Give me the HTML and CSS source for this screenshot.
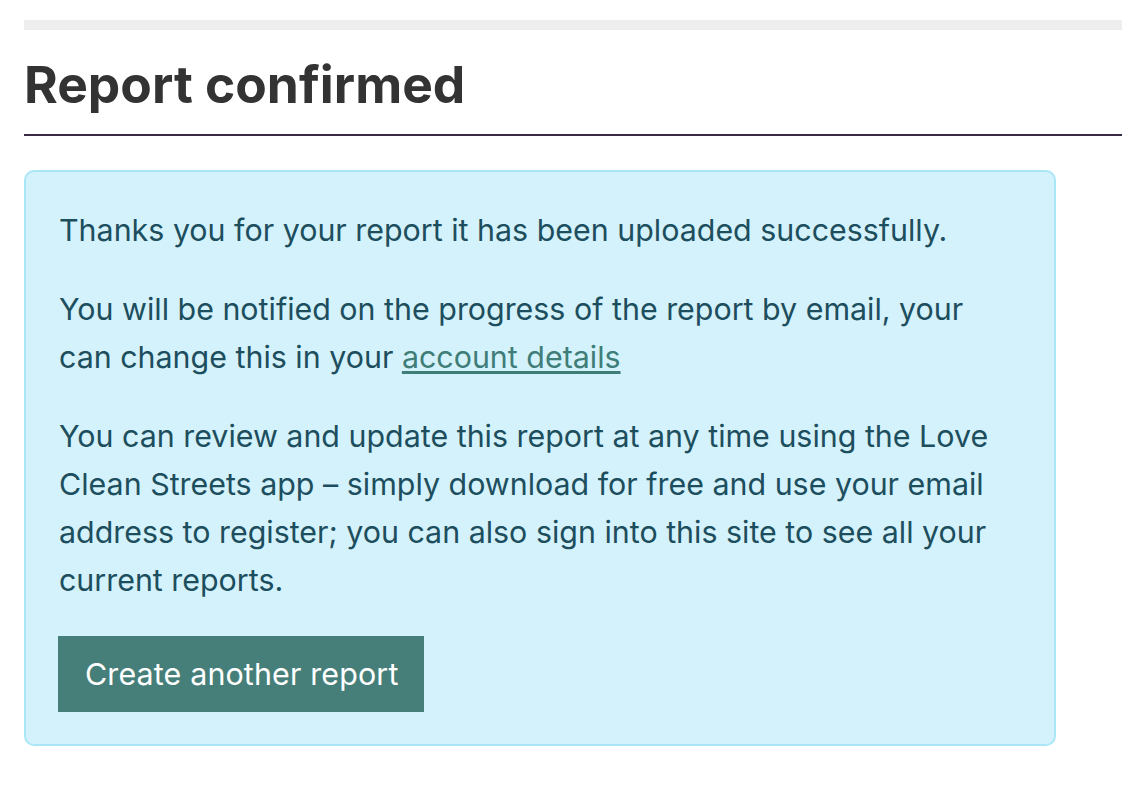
FILE: index.html
```html
<!DOCTYPE html>
<html lang="en">
<head>
<meta charset="utf-8">
<title>Report confirmed</title>
<link rel="stylesheet" href="styles.css">
</head>
<body>
<div class="page">
  <div class="topbar"></div>
  <h1 class="title">Report confirmed</h1>
  <div class="alert">
    <p>Thanks you for your report it has been uploaded successfully.</p>
    <p>You will be notified on the progress of the report by email, your can change this in your <a href="#" class="link">account details</a></p>
    <p>You can review and update this report at any time using the Love Clean Streets app – simply download for free and use your email address to register; you can also sign into this site to see all your current reports.</p>
    <a href="#" class="btn">Create another report</a>
  </div>
</div>
</body>
</html>
```

FILE: styles.css
```css
html, body {
  margin: 0;
  padding: 0;
  background: #ffffff;
}
body {
  font-family: Inter, "Noto Sans", "Liberation Sans", sans-serif;
}
.page {
  padding: 20px 0 0 24px;
}
.topbar {
  height: 10px;
  background: #eeeeee;
}
.title {
  margin: 0;
  padding: 24px 0 20px;
  font-size: 51.5px;
  line-height: 60px;
  font-weight: 700;
  color: #333333;
  letter-spacing: 0;
  border-bottom: 2px solid #3a2b45;
}
.alert {
  margin-top: 34px;
  width: 1032px;
  box-sizing: border-box;
  padding: 34px 33px 32px;
  background: #d4f2fb;
  border: 2px solid #a9e7f6;
  border-radius: 10px;
  color: #1d4e5e;
  font-size: 30.4px;
  line-height: 48px;
}
.alert p {
  margin: 0 0 31px;
}
.alert p:last-of-type {
  margin-bottom: 32px;
}
.link {
  color: #3f7e78;
  text-decoration: underline;
  text-underline-offset: 3px;
}
.btn {
  display: inline-block;
  margin-left: -1px;
  background: #467f7a;
  color: #ffffff;
  text-decoration: none;
  padding: 14px 26px 14px 27px;
  font-size: 30.4px;
  line-height: 48px;
  letter-spacing: 0.15px;
}
```
